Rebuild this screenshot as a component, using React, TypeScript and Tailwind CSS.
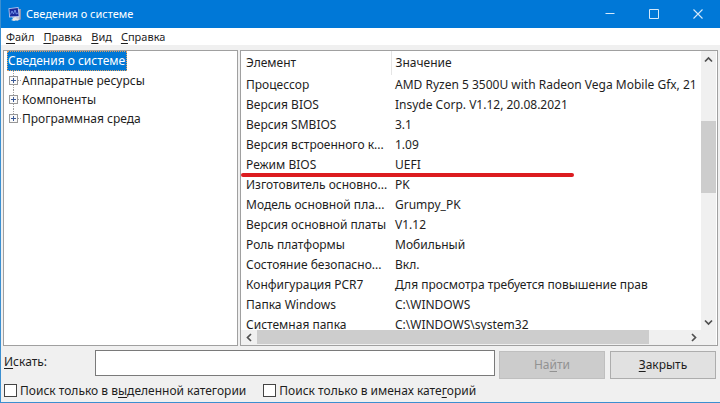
import React, { useState } from "react";
import { clsx } from "clsx";

const menu = [
  ["Ф", "айл"],
  ["П", "равка"],
  ["В", "ид"],
  ["С", "правка"],
];

const categories = ["Аппаратные ресурсы", "Компоненты", "Программная среда"];

const rows = [
  { name: "Процессор", value: "AMD Ryzen 5 3500U with Radeon Vega Mobile Gfx, 21" },
  { name: "Версия BIOS", value: "Insyde Corp. V1.12, 20.08.2021" },
  { name: "Версия SMBIOS", value: "3.1" },
  { name: "Версия встроенного к...", value: "1.09" },
  { name: "Режим BIOS", value: "UEFI", marked: true },
  { name: "Изготовитель основно...", value: "PK" },
  { name: "Модель основной пла...", value: "Grumpy_PK" },
  { name: "Версия основной платы", value: "V1.12" },
  { name: "Роль платформы", value: "Мобильный" },
  { name: "Состояние безопасно...", value: "Вкл." },
  { name: "Конфигурация PCR7", value: "Для просмотра требуется повышение прав" },
  { name: "Папка Windows", value: "C:\\WINDOWS" },
  { name: "Системная папка", value: "C:\\WINDOWS\\system32" },
];

function AppIcon() {
  return (
    <svg width="16" height="16" viewBox="0 0 16 16" aria-hidden="true">
      <path d="M10 3L13 3.5V13L9 15L6 12Z" fill="#c9ccd6" />
      <path d="M11.5 3L13 3.8V13L11.5 13.8Z" fill="#8d93b0" />
      <path d="M0.5 2.2L10.5 1L11.5 11L1.2 11.6Z" fill="#b9c6ee" />
      <path d="M1.4 3L9.8 2L10.6 10L2 10.6Z" fill="#1b2a9c" />
      <path d="M2.5 8.5L4 5L5.5 8L7 4L8.3 8L10 7" fill="none" stroke="#7fa0f0" strokeWidth="0.8" />
      <path d="M4 11.5L8 11.3L8.5 12.5L11 13.5L6 15L3 14L5 13Z" fill="#e8e6e6" />
    </svg>
  );
}

function Chevron({ d }: { d: string }) {
  return (
    <svg width="9" height="9" viewBox="0 0 9 9" fill="none" stroke="#505050" strokeWidth="1.7" aria-hidden="true">
      <path d={d} />
    </svg>
  );
}

function TitleBar() {
  return (
    <header className="flex h-7 shrink-0 items-center bg-[#0078d7] pl-[7px] text-white">
      <AppIcon />
      <h1 className="ml-0.5 flex-1 text-[11px]">Сведения о системе</h1>
      <button aria-label="Свернуть" className="flex h-7 w-11 items-center justify-center">
        <svg width="10" height="10" viewBox="0 0 10 10" stroke="#d5e9fa">
          <path d="M0.5 4.5h9" />
        </svg>
      </button>
      <button aria-label="Развернуть" className="flex h-7 w-11 items-center justify-center">
        <svg width="10" height="10" viewBox="0 0 10 10" fill="none" stroke="#d5e9fa">
          <path d="M0.5 0.5h9v9h-9z" />
        </svg>
      </button>
      <button aria-label="Закрыть окно" className="flex h-7 w-11 items-center justify-center">
        <svg width="10" height="10" viewBox="0 0 10 10" stroke="#d5e9fa" strokeWidth="1.1">
          <path d="M0.5 0.5l9 9M9.5 0.5l-9 9" />
        </svg>
      </button>
    </header>
  );
}

function Tree() {
  return (
    <nav className="w-[235px] shrink-0 border border-[#a0a0a0] bg-white pl-[3px] text-xs">
      <button className="block h-5 border border-dotted border-[#e0a060] bg-[#0078d7] pr-px leading-[18px] text-white">
        Сведения о системе
      </button>
      <ul>
        {categories.map((name, i) => (
          <li key={name} className="flex h-[19px] items-center">
            <svg width="15" height="19" viewBox="0 0 15 19" fill="none" className="shrink-0">
              <path d={i === 2 ? "M6.5 0v9" : "M6.5 0v19"} stroke="#a0a0a0" strokeDasharray="1 1" />
              <path d="M11 9.5h4" stroke="#a0a0a0" strokeDasharray="1 1" />
              <rect x="2.5" y="5.5" width="8" height="8" fill="#fafafa" stroke="#989898" />
              <path d="M4 9.5h5M6.5 7v5" stroke="#3c5a96" />
            </svg>
            <button className="leading-[19px]">{name}</button>
          </li>
        ))}
      </ul>
    </nav>
  );
}

function Details() {
  return (
    <section className="flex min-w-0 flex-1 flex-col border border-[#a0a0a0] bg-white">
      <div className="flex min-h-0 flex-1">
        <div className="min-w-0 flex-1 overflow-hidden">
          <table className="w-full table-fixed text-left text-xs leading-5 whitespace-nowrap">
            <thead>
              <tr className="h-6">
                <th className="w-[150px] border-r border-[#e5e5e5] pl-[5px] font-normal">Элемент</th>
                <th className="pl-1 font-normal">Значение</th>
              </tr>
            </thead>
            <tbody>
              {rows.map((row) => (
                <tr key={row.name} className="h-5">
                  <td className="relative pl-[5px]">
                    {row.name}
                    {row.marked && (
                      <span className="absolute -bottom-0.5 left-0 z-10 h-1 w-[333px] rounded-full bg-[#dc1c20]" />
                    )}
                  </td>
                  <td className="overflow-hidden pl-1">{row.value}</td>
                </tr>
              ))}
            </tbody>
          </table>
        </div>
        <div className="mr-px flex w-[15px] shrink-0 flex-col bg-[#f0f0f0]">
          <button aria-label="Вверх" className="flex h-4 items-center justify-center">
            <Chevron d="M1 6.5L4.5 3L8 6.5" />
          </button>
          <div className="flex flex-1 flex-col">
            <div className="flex-[54]" />
            <div className="flex-[72] bg-[#cdcdcd]" />
            <div className="flex-[121]" />
          </div>
          <button aria-label="Вниз" className="flex h-4 items-center justify-center">
            <Chevron d="M1 2.5L4.5 6L8 2.5" />
          </button>
        </div>
      </div>
      <div className="mr-px flex h-[15px] shrink-0 bg-[#f0f0f0] pb-px">
        <button aria-label="Влево" className="flex w-4 items-center justify-center">
          <Chevron d="M6 1L2.5 4.5L6 8" />
        </button>
        <div className="flex flex-1">
          <div className="flex-[392] bg-[#cdcdcd]" />
          <div className="flex-[36]" />
        </div>
        <button aria-label="Вправо" className="mr-[15px] flex w-4 items-center justify-center">
          <Chevron d="M3 1L6.5 4.5L3 8" />
        </button>
      </div>
    </section>
  );
}

function Checkbox({ id, children, className }: { id: string; children: React.ReactNode; className?: string }) {
  return (
    <div className={clsx("flex items-center gap-[3px]", className)}>
      <input
        id={id}
        type="checkbox"
        className="size-[13px] shrink-0 appearance-none border border-[#444] bg-white checked:bg-[#0078d7]"
      />
      <label htmlFor={id}>{children}</label>
    </div>
  );
}

export default function App() {
  const [query, setQuery] = useState("");

  return (
    <div className="flex h-screen flex-col overflow-hidden border-b border-l border-[#3c8fd0] bg-[#f0f0f0] font-['Noto_Sans','Open_Sans',sans-serif] text-[#1e1e1e]">
      <TitleBar />
      <nav className="flex h-[17px] shrink-0 items-end gap-[9px] bg-white pl-[5px] text-[11px]">
        {menu.map(([key, rest]) => (
          <button key={rest + key} className="leading-4">
            <u className="underline-offset-2">{key}</u>
            {rest}
          </button>
        ))}
      </nav>
      <main className="mt-[5px] flex min-h-0 flex-1 gap-0.5 px-0.5">
        <Tree />
        <Details />
      </main>
      <form className="shrink-0 pt-1 pr-1 pl-[3px] text-xs" onSubmit={(e) => e.preventDefault()}>
        <div className="flex h-[29px] items-start">
          <label htmlFor="query" className="w-[91px] shrink-0 pt-0.5 leading-5">
            <u className="underline-offset-2">И</u>скать:
          </label>
          <input
            id="query"
            value={query}
            onChange={(e) => setQuery(e.target.value)}
            className="h-[26px] min-w-0 flex-1 border border-[#7a7a7a] bg-white px-1 outline-none"
          />
          <button
            disabled={!query}
            className="mt-px ml-1 h-7 w-[106px] border border-[#bfbfbf] bg-[#e1e1e1] disabled:bg-[#cccccc] disabled:text-[#929292]"
          >
            На<u className="underline-offset-2">й</u>ти
          </button>
          <button type="button" className="mt-px ml-[5px] h-7 w-[106px] border border-[#adadad] bg-[#e1e1e1]">
            <u className="underline-offset-2">З</u>акрыть
          </button>
        </div>
        <div className="flex h-[23px] items-center gap-[17px]">
          <Checkbox id="selected-only">
            Поиск только в в<u className="underline-offset-2">ы</u>деленной категории
          </Checkbox>
          <Checkbox id="names-only">
            Поиск только в именах кате<u className="underline-offset-2">г</u>орий
          </Checkbox>
        </div>
      </form>
    </div>
  );
}
